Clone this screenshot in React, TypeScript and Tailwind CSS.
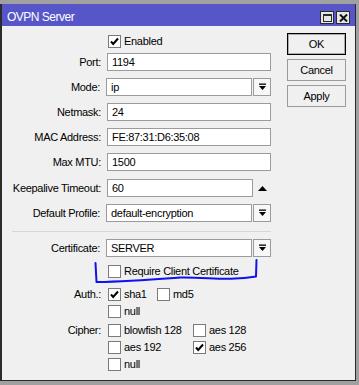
import React from 'react';

function Check({ checked }: { checked?: boolean }) {
  return (
    <div className="flex h-[13px] w-[13px] shrink-0 items-center justify-center border border-[#7a7a7a] bg-white">
      {checked && (
        <svg width="11" height="11" viewBox="0 0 11 11">
          <path d="M2 5.5 L4.2 8 L9 2.5" fill="none" stroke="#000" strokeWidth="2" />
        </svg>
      )}
    </div>
  );
}

function DropBtn() {
  return (
    <div className="ml-[1px] flex h-[18px] w-[18px] shrink-0 items-center justify-center border border-[#9b9b9b] bg-[#f7f7f7]">
      <svg width="9" height="8" viewBox="0 0 9 8">
        <rect x="1" y="0.5" width="7" height="1.3" fill="#000" />
        <path d="M1 3 L8 3 L4.5 7 Z" fill="#000" />
      </svg>
    </div>
  );
}

function Field({ label, value, mt, dropdown, spinner }: { label: string; value: string; mt: string; dropdown?: boolean; spinner?: boolean }) {
  return (
    <div className={`flex h-[18px] items-center ${mt}`}>
      <div className="w-[99px] text-right">{label}</div>
      <div className="ml-[6px] flex items-center">
        <div
          className={`flex h-[18px] items-center border border-[#9b9b9b] bg-white pl-[4px] ${dropdown || spinner ? 'w-[146px]' : 'w-[164px]'}`}
        >
          {value}
        </div>
        {dropdown && <DropBtn />}
        {spinner && (
          <svg className="ml-[5px]" width="9" height="5" viewBox="0 0 9 5">
            <path d="M0 5 L4.5 0 L9 5 Z" fill="#000" />
          </svg>
        )}
      </div>
    </div>
  );
}

function CheckItem({ label, checked, w }: { label: string; checked?: boolean; w?: string }) {
  return (
    <div className={`flex h-[13px] items-center ${w || ''}`}>
      <Check checked={checked} />
      <span className="ml-[3px]">{label}</span>
    </div>
  );
}

function CheckRow({ label, mt, children }: { label?: string; mt: string; children: React.ReactNode }) {
  return (
    <div className={`flex h-[13px] items-center ${mt}`}>
      <div className="w-[99px] text-right">{label}</div>
      <div className="ml-[7px] flex items-center">{children}</div>
    </div>
  );
}

export default function App() {
  return (
    <div className="h-[385px] w-[359px] bg-[#a0a0a0] pt-[4px] font-['Liberation_Sans',Arial,sans-serif] text-[11px] tracking-[-0.3px] text-black">
      <div className="relative flex h-[377px] w-[356px] flex-col border-b border-l-2 border-r border-[#2b2b2b] bg-[#f0f0f0]">
        {/* title bar */}
        <div className="flex h-[22px] items-center bg-[#5656c8] pl-[5px] pr-[5px] text-white">
          <span className="mt-[4px] text-[12px] tracking-[-0.5px]">OVPN Server</span>
          <div className="mb-[2px] ml-auto flex gap-[2px] self-end">
            <div className="flex h-[13px] w-[14px] items-center justify-center border border-[#2b2b2b] bg-[#e6e6e6]">
              <div className="h-[8px] w-[9px] border border-t-2 border-[#2b2b2b]" />
            </div>
            <div className="flex h-[13px] w-[14px] items-center justify-center border border-[#2b2b2b] bg-[#e6e6e6]">
              <svg width="9" height="8" viewBox="0 0 9 8">
                <path d="M1 0.5 L8 7.5 M8 0.5 L1 7.5" stroke="#111" strokeWidth="2" />
              </svg>
            </div>
          </div>
        </div>

        <div className="flex pt-[7px]">
          {/* form */}
          <div className="flex w-[269px] flex-col">
            <CheckRow mt="mt-[2px]">
              <CheckItem label="Enabled" checked />
            </CheckRow>
            <Field label="Port:" value="1194" mt="mt-[5px]" />
            <Field label="Mode:" value="ip" mt="mt-[7px]" dropdown />
            <Field label="Netmask:" value="24" mt="mt-[7px]" />
            <Field label="MAC Address:" value="FE:87:31:D6:35:08" mt="mt-[7px]" />
            <Field label="Max MTU:" value="1500" mt="mt-[7px]" />
            <Field label="Keepalive Timeout:" value="60" mt="mt-[8px]" spinner />
            <Field label="Default Profile:" value="default-encryption" mt="mt-[7px]" dropdown />
            <div className="ml-[10px] mt-[9px] border-t border-[#d6d6d6]" />
            <Field label="Certificate:" value="SERVER" mt="mt-[7px]" dropdown />
            <CheckRow mt="mt-[8px]">
              <CheckItem label="Require Client Certificate" />
            </CheckRow>
            <CheckRow label="Auth.:" mt="mt-[10px]">
              <CheckItem label="sha1" checked w="w-[49px]" />
              <CheckItem label="md5" />
            </CheckRow>
            <CheckRow mt="mt-[4px]">
              <CheckItem label="null" />
            </CheckRow>
            <CheckRow label="Cipher:" mt="mt-[6px]">
              <CheckItem label="blowfish 128" w="w-[85px]" />
              <CheckItem label="aes 128" />
            </CheckRow>
            <CheckRow mt="mt-[4px]">
              <CheckItem label="aes 192" w="w-[85px]" />
              <CheckItem label="aes 256" checked />
            </CheckRow>
            <CheckRow mt="mt-[4px]">
              <CheckItem label="null" />
            </CheckRow>
          </div>

          {/* buttons */}
          <div className="ml-[16px] flex w-[59px] flex-col gap-[4px]">
            <button className="h-[22px] border border-black bg-[#f0f0f0] shadow-[inset_0_0_0_1px_#adadad]">OK</button>
            <button className="h-[22px] border border-[#9b9b9b] bg-[#f0f0f0]">Cancel</button>
            <button className="h-[22px] border border-[#9b9b9b] bg-[#f0f0f0]">Apply</button>
          </div>
        </div>

        {/* hand-drawn annotation */}
        <svg className="pointer-events-none absolute left-[-2px] top-0" width="356" height="377" viewBox="0 0 356 377">
          <path
            d="M95.5 259 L96.5 278 C130 277.5 160 275 180 273.5 C200 273 220 275.5 235 274.5 C245 274 252 273 256 272.5 L256.5 256"
            fill="none"
            stroke="#1010f0"
            strokeWidth="2"
            strokeLinecap="round"
            strokeLinejoin="round"
          />
        </svg>
      </div>
    </div>
  );
}
